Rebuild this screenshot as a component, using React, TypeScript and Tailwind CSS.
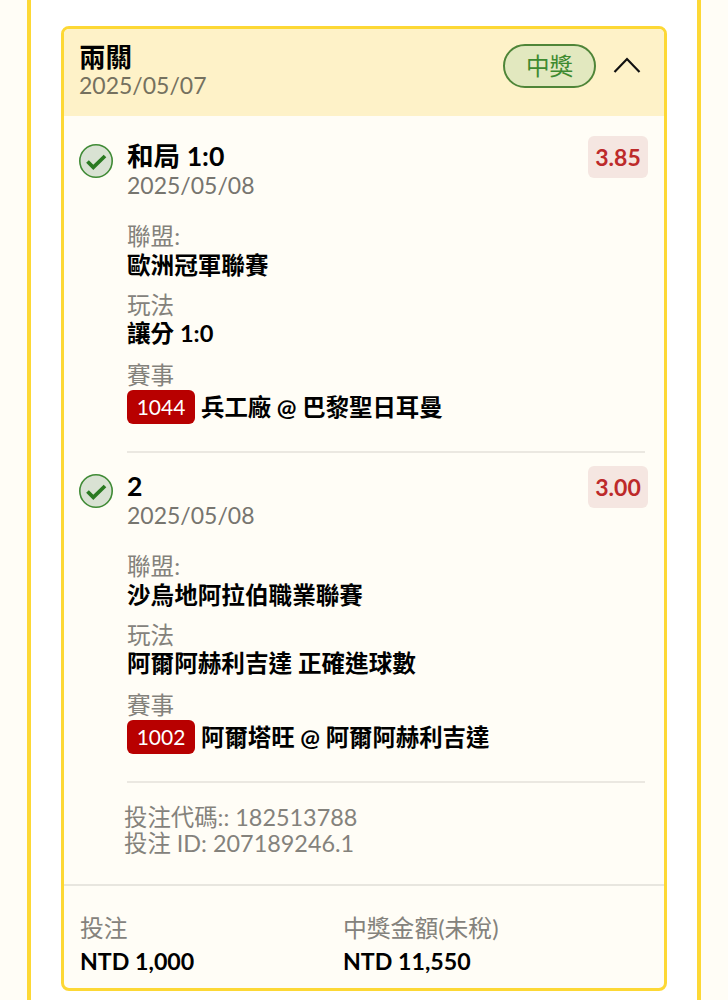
const font = "[font-family:Lato,'Noto_Sans_CJK_TC',sans-serif]";

const CheckIcon = () => (
  <svg width="34" height="34" viewBox="0 0 34 34" className="shrink-0 -ml-[1px]">
    <circle cx="17" cy="17" r="16.2" fill="#d9e2d3" stroke="#3f8a35" strokeWidth="1.6" />
    <path d="M8.5 17.5l5.8 5.8L26 12" fill="none" stroke="#2b7a22" strokeWidth="3.8" />
  </svg>
);

const Leg = ({ pick, odds, league, market, code, match }: { pick: string; odds: string; league: string; market: string; code: string; match: string }) => (
  <div className="flex">
    <div className="w-[47px] pt-[8px] shrink-0">
      <CheckIcon />
    </div>
    <div className="flex-1">
      <div className="flex justify-between">
        <div className="pt-[5px]">
          <div className="text-[26.6px] leading-[30px] font-bold text-black">{pick}</div>
          <div className="text-[23px] leading-[28px] text-[#77756f]">2025/05/08</div>
        </div>
        <div className="mr-[-3px] w-[60px] h-[42px] text-center rounded-[6px] bg-[#f5e6e1] text-[23px] font-bold leading-[43px] text-[#bd2a2a]">{odds}</div>
      </div>
      <div className="mt-[23px] text-[23.6px] leading-[29px] text-[#84827c]">聯盟:</div>
      <div className="text-[23.6px] leading-[28px] font-bold text-black">{league}</div>
      <div className="mt-[12px] text-[23.6px] leading-[28px] text-[#84827c]">玩法</div>
      <div className="text-[23.6px] leading-[29px] font-bold text-black">{market}</div>
      <div className="mt-[13px] text-[23.6px] leading-[28px] text-[#84827c]">賽事</div>
      <div className="mt-[1px] flex items-center gap-[6px]">
        <span className="w-[68px] h-[34px] rounded-[6px] bg-[#b80000] text-white text-[21px] leading-[34px] text-center">{code}</span>
        <span className="text-[23.4px] leading-[34px] font-bold text-black">{match}</span>
      </div>
    </div>
  </div>
);

export default function App() {
  return (
    <div className={`${font} h-[1000px] overflow-hidden bg-[#fffdf6] pl-[27px]`}>
      <div className="h-full w-[674px] border-x-[4px] border-[#fdd835] bg-white pl-[30px] pt-[26px]">
        <div className="w-[606px] h-[965px] rounded-[8px] border-[3px] border-[#fdd835] bg-[#fffdf6] overflow-hidden">
          <div className="h-[87px] bg-[#fef2c8] pl-[16px] pr-[23px] pt-[13px] flex items-start justify-between">
            <div className="-ml-[1px]">
              <div className="text-[26.6px] leading-[30px] font-bold text-black">兩關</div>
              <div className="text-[23px] leading-[27px] text-[#75715f]">2025/05/07</div>
            </div>
            <div className="flex items-center gap-[17px] pt-[2px]">
              <span className="w-[93px] h-[44px] rounded-full border-[2px] border-[#4f8538] bg-[#e2e8bf] text-center text-[23.6px] leading-[41px] text-[#3e8a30]">中獎</span>
              <svg width="28" height="16" viewBox="0 0 28 16" fill="none" stroke="#111" strokeWidth="2.2" className="-mt-[2px]">
                <path d="M1.5 15L14 2l12.5 13" />
              </svg>
            </div>
          </div>
          <div className="pl-[16px] pr-[19px] pt-[20px]">
            <Leg pick="和局 1:0" odds="3.85" league="歐洲冠軍聯賽" market="讓分 1:0" code="1044" match="兵工廠 @ 巴黎聖日耳曼" />
            <div className="ml-[47px] mt-[27px] mb-[13px] h-[2px] bg-[#ebe8e1]" />
            <Leg pick="2" odds="3.00" league="沙烏地阿拉伯職業聯賽" market="阿爾阿赫利吉達 正確進球數" code="1002" match="阿爾塔旺 @ 阿爾阿赫利吉達" />
            <div className="ml-[47px] mt-[27px] h-[2px] bg-[#ebe8e1]" />
            <div className="ml-[44px] mt-[21px] text-[23.4px] leading-[26px] text-[#84827c]">
              <div>投注代碼:: 182513788</div>
              <div>投注 ID: 207189246.1</div>
            </div>
          </div>
          <div className="mt-[28px] border-t-[2px] border-[#e8e6df] pl-[16px] pt-[26px] flex">
            <div className="w-[263px]">
              <div className="text-[23.8px] leading-[32px] text-[#84827c]">投注</div>
              <div className="mt-[1px] text-[23.2px] leading-[32px] font-bold text-black">NTD 1,000</div>
            </div>
            <div>
              <div className="text-[23.8px] leading-[32px] text-[#84827c]">中獎金額(未稅)</div>
              <div className="mt-[1px] text-[23.2px] leading-[32px] font-bold text-black">NTD 11,550</div>
            </div>
          </div>
        </div>
      </div>
    </div>
  );
}
